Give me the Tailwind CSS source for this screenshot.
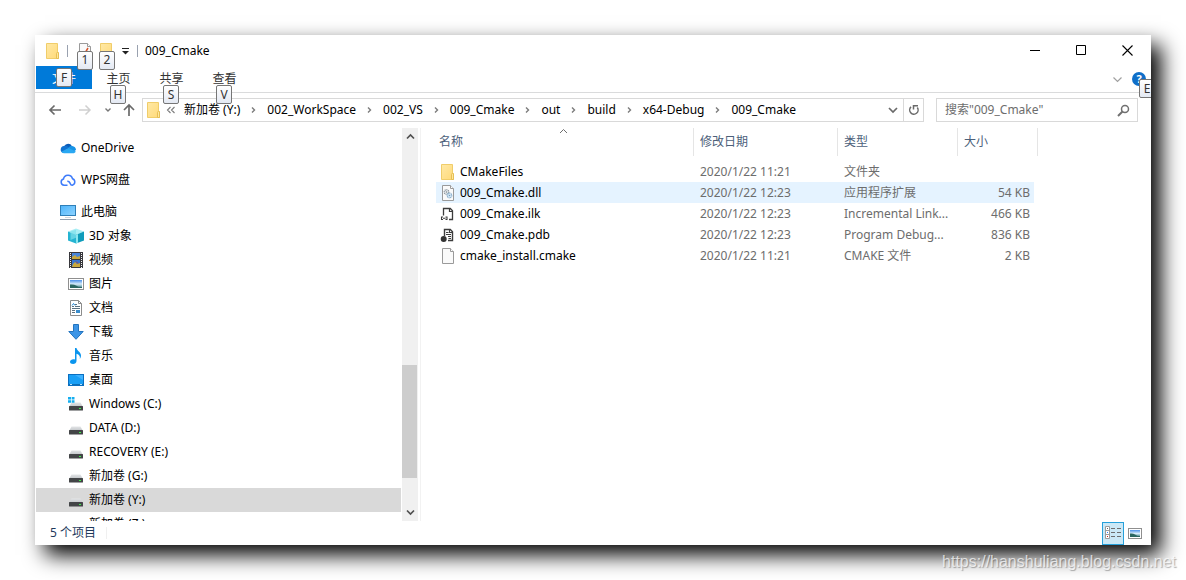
<!DOCTYPE html>
<html lang="zh-CN">
<head>
<meta charset="utf-8">
<meta name="viewport" content="width=device-width, initial-scale=1">
<title>009_Cmake</title>
<script src="https://cdn.jsdelivr.net/npm/@tailwindcss/browser@4"></script>
</head>
<body class="relative flex h-screen min-h-[400px] flex-col overflow-hidden bg-white p-[35px] font-['Noto_Sans','Noto_Sans_CJK_SC',sans-serif] text-xs text-black">

<svg class="absolute size-0" aria-hidden="true">
  <defs>
    <linearGradient id="gFolder" x1="0" y1="0" x2="1" y2="1"><stop offset="0" stop-color="#ffe9a6"/><stop offset="1" stop-color="#ffd978"/></linearGradient>
    <linearGradient id="gScreen" x1="0" y1="0" x2="1" y2="1"><stop offset="0" stop-color="#4db4fb"/><stop offset="1" stop-color="#8fd4ff"/></linearGradient>
    <linearGradient id="gPic" x1="0" y1="0" x2="0" y2="1"><stop offset="0" stop-color="#4a8fe8"/><stop offset=".5" stop-color="#d7ecfa"/><stop offset="1" stop-color="#3f7f86"/></linearGradient>
    <linearGradient id="gDrive" x1="0" y1="0" x2="0" y2="1"><stop offset="0" stop-color="#e3e5e7"/><stop offset="1" stop-color="#bfc3c6"/></linearGradient>
  </defs>
  <symbol id="folder" viewBox="0 0 16 16">
    <path d="M1.500.5h11v9.500h1v5.500h-12z" fill="url(#gFolder)" stroke="#f0cd6a"/>
    <path d="M11.500 15.500v-5q0-1 1-1h1v6z" fill="#ffe79c" stroke="#e6bf55"/>
  </symbol>
  <symbol id="cloud" viewBox="0 0 16 16">
    <path d="M4.200 6.300A4.300 4.300 0 0 1 12 6.200L9 10.500z" fill="#0a5cb8"/>
    <path d="M4 5.900c2-.4 3.600.5 5 1.400L3.500 13A3.600 3.600 0 0 1 4 5.900z" fill="#1173d1"/>
    <path d="M8 8.300c1-2 3-2.500 4.200-2.200 2.200.3 3.800 1.700 3.800 3.900L13 12z" fill="#1793e6"/>
    <path d="M1.400 11.800 8.500 8l7.300 3.400c-.5 1.200-1.500 1.800-2.800 1.800H3.800c-1 0-1.900-.5-2.400-1.400z" fill="#2aa8f2"/>
  </symbol>
  <symbol id="wps" viewBox="0 0 16 16">
    <path d="M7.500 13.200H4.100A3.100 3.100 0 0 1 3.500 7.100 4.600 4.600 0 0 1 12.500 6.700 3.400 3.400 0 0 1 12.300 13.200Q10.800 13.300 10.300 11.700 9.500 9.200 7.300 9.300" fill="none" stroke="#3d7bfa" stroke-width="1.500" stroke-linejoin="round"/>
  </symbol>
  <symbol id="pc" viewBox="0 0 16 16">
    <rect x=".5" y="1.500" width="15" height="10" fill="url(#gScreen)" stroke="#2f7fb8"/>
    <path d="M0 15.500h16" stroke="#8f9fb0"/><path d="M5 13.500h6" stroke="#cfd6dc"/>
  </symbol>
  <symbol id="cube" viewBox="0 0 16 16">
    <path d="M0 3.500 8 .5l8 3-8 3.200z" fill="#a9eef5"/><path d="M0 3.500l8 3.200V15.500l-8-3z" fill="#25b4d2"/><path d="M16 3.500 8 6.700v8.800l8-3z" fill="#0f9cbb"/><path d="M2.500 3.500 8 1.800v8L2.500 12z" fill="#7fdfeb" opacity=".7"/><path d="M8 6.700v8.800l2-.7V6z" fill="#8be6ef"/>
  </symbol>
  <symbol id="video" viewBox="0 0 16 16">
    <rect x="1" y="0" width="14" height="16" fill="#38383c"/><rect x="4" y="1" width="8" height="6" fill="#4a86d8"/><rect x="4" y="8" width="8" height="7" fill="#3474cf"/>
    <path d="M4 5l3-2 2 2 3-1v3H4zM5 12l2-2 2 2 3-1v4H4z" fill="#c9a83c"/><path d="M8 9.500l2 2" stroke="#c0392b"/>
    <path d="M2.500 1v15M13.500 1v15" stroke="#f4f4f4" stroke-width="1" stroke-dasharray="1 1"/>
  </symbol>
  <symbol id="picture" viewBox="0 0 16 16">
    <rect x=".5" y="2.500" width="15" height="11" fill="#fff" stroke="#8f8f8f"/><rect x="2" y="4" width="12" height="8" fill="url(#gPic)"/><path d="M2 8.500q4-.5 6 1t6 1.500v1H2z" fill="#2b6660"/>
  </symbol>
  <symbol id="doc" viewBox="0 0 16 16">
    <path d="M2.500.5h8l3 3v12h-11z" fill="#fff" stroke="#8c8c8c"/><path d="M10.500.5v3h3" fill="none" stroke="#8c8c8c"/>
    <path d="M4 6.500h2M7 4.500h2M7 6.500h5M4 8.500h8M4 10.500h3M4 12.500h3" stroke="#5c7180"/><path d="M4 5.500l1.500-2 1.500 2" fill="none" stroke="#1d83d4"/><rect x="8" y="10" width="4" height="3" fill="#3a8dcc"/>
  </symbol>
  <symbol id="down" viewBox="0 0 16 16"><path d="M5.500.5h5v7h4.700L8 15.300.8 7.500h4.700z" fill="#3d95e6" stroke="#2374bf"/></symbol>
  <symbol id="music" viewBox="0 0 16 16"><path d="M7 0h1.500c.3 2.700 4.500 4 4.500 7.500 0 1.400-.6 2.600-1.200 3.500.6-2.700-.5-4.400-3.300-5.200V13c0 1.700-1.600 3-3.400 3S2 15.200 2 13.800s1.700-2.600 3.400-2.600c.6 0 1.100.1 1.600.3z" fill="#0a95ee"/></symbol>
  <symbol id="desktop" viewBox="0 0 16 16"><rect x=".5" y="2.500" width="15" height="11" fill="#1a9ff5" stroke="#0b6fc0"/><path d="M1 12.500h14" stroke="#0d6fb5"/><path d="M2 12.500h2M12 12.500h2" stroke="#b9e2ff"/><path d="M7 3h8v5z" fill="#3fb2ff"/></symbol>
  <symbol id="drive" viewBox="0 0 16 16"><path d="M3.500 6.500h9L15 11H1z" fill="url(#gDrive)"/><rect x="1" y="10" width="14" height="4.500" rx=".5" fill="#434547"/><rect x="11" y="12" width="2" height="1" fill="#3df04a"/></symbol>
  <symbol id="windrive" viewBox="0 0 16 16"><use href="#drive"/><path d="M0 1h3v2.500H0zM3.700 1H6.500v2.500H3.700zM0 4.200h3v2.600H0zM3.700 4.200h2.800v2.600H3.700z" fill="#14aef0"/></symbol>
  <symbol id="page" viewBox="0 0 16 16"><path d="M2.500.5h8l3 3v12h-11z" fill="#fafafa" stroke="#9a9a9a"/><path d="M10.500.5v3h3" fill="#fff" stroke="#9a9a9a"/></symbol>
  <symbol id="dll" viewBox="0 0 16 16"><use href="#page"/><circle cx="6.500" cy="7" r="2.300" fill="#e9edf0" stroke="#8b959e" stroke-dasharray="1 .6" stroke-width="1.200"/><circle cx="6.500" cy="7" r=".8" fill="#7e8891"/><circle cx="9.500" cy="10.500" r="2.300" fill="#dcebf7" stroke="#7fa9c9" stroke-dasharray="1 .6" stroke-width="1.200"/><circle cx="9.500" cy="10.500" r=".8" fill="#6f9cbf"/></symbol>
  <symbol id="ilk" viewBox="0 0 16 16"><path d="M3.500 9.500V2.500h6.800l2.200 2.200v8.800H9" fill="#fff" stroke="#3c3c3c" stroke-width="1.300"/><path d="M9.500 2.500v3h3" fill="none" stroke="#3c3c3c" stroke-width="1.200"/><path d="M3 11H1.500v2.500H3M5.500 11H7v2.500H5.500M3 12.300h2.500" fill="none" stroke="#3c3c3c" stroke-width="1.100"/></symbol>
  <symbol id="pdb" viewBox="0 0 16 16"><path d="M4.500 9V2.500h5.800l2.200 2.200v8.800H8" fill="#fff" stroke="#3c3c3c" stroke-width="1.400"/><path d="M9.500 2.500v3h3M6 5.500h2.500M6 7.500h5M8 9.500h3M8.500 11.500H11" fill="none" stroke="#3c3c3c" stroke-width="1.100"/><circle cx="3.700" cy="12" r="3" fill="#333"/></symbol>
  <symbol id="chev" viewBox="0 0 8 8"><path d="M2.500 1.500 5 4 2.500 6.500" fill="none" stroke="#7b7b7b" stroke-width="1.400"/></symbol>
</svg>

<main class="relative flex min-h-0 flex-1 flex-col overflow-visible bg-white shadow-[10px_10px_20px_#000]">
  <header class="flex h-[31px] shrink-0 items-center pr-px pl-[10px]">
    <svg class="size-4"><use href="#folder"/></svg>
    <span class="ml-[6px] h-3 w-px bg-gray-400"></span>
    <button class="relative ml-[9px] h-4 w-4" aria-label="属性">
      <svg class="size-4" viewBox="0 0 16 16"><path d="M2.500.5h8l3 3v12h-11z" fill="#fafafa" stroke="#9a9a9a"/><path d="M10.500.5v3h3" fill="#fff" stroke="#9a9a9a"/><path d="M6 9l1.500 2L11 5" fill="none" stroke="#d9542b" stroke-width="1.500"/></svg>
      <kbd class="absolute top-2 left-0 z-10 flex h-[19px] w-4 items-center justify-center rounded-xs border border-[#767676] bg-linear-to-b from-white to-[#e4e9f3] font-[inherit] text-[#333]">1</kbd>
    </button>
    <button class="relative ml-[6px] h-4 w-4" aria-label="新建文件夹">
      <svg class="size-4"><use href="#folder"/></svg>
      <kbd class="absolute top-2 left-0 z-10 flex h-[19px] w-4 items-center justify-center rounded-xs border border-[#767676] bg-linear-to-b from-white to-[#e4e9f3] font-[inherit] text-[#333]">2</kbd>
    </button>
    <button class="ml-[6px]" aria-label="自定义快速访问工具栏"><svg class="size-[9px]" viewBox="0 0 9 9"><path d="M1 2.500h7" stroke="#222"/><path d="M1 5h7L4.500 8.500z" fill="#222"/></svg></button>
    <span class="ml-[7px] h-3 w-px bg-gray-400"></span>
    <h1 class="ml-[7px]">009_Cmake</h1>
    <div class="ml-auto flex">
      <button class="flex w-[46px] justify-center" aria-label="最小化"><svg class="size-[11px]" viewBox="0 0 11 11"><path d="M0 5.500h10" stroke="#000"/></svg></button>
      <button class="flex w-[46px] justify-center" aria-label="最大化"><svg class="size-[11px]" viewBox="0 0 11 11"><path d="M.5.5h9v9h-9z" fill="none" stroke="#000"/></svg></button>
      <button class="flex w-[46px] justify-center" aria-label="关闭"><svg class="size-[11px]" viewBox="0 0 11 11"><path d="M.5.5l10 10M10.500.5l-10 10" stroke="#000" stroke-width="1.100"/></svg></button>
    </div>
  </header>

  <nav class="flex h-[27px] shrink-0 items-start border-b border-[#dadbdc] pl-px text-[#333]">
    <button class="relative flex h-[23px] w-14 items-center justify-center bg-[#007ad9] pt-[2px] text-white">文件<kbd class="absolute top-[2px] left-5 z-10 flex h-[19px] w-4 items-center justify-center rounded-xs border border-[#767676] bg-linear-to-b from-white to-[#e4e9f3] font-[inherit] text-[#333]">F</kbd></button>
    <button class="relative flex h-[23px] w-[53px] items-center justify-center pt-[2px]">主页<kbd class="absolute top-[19px] left-[18px] z-10 flex h-[19px] w-4 items-center justify-center rounded-xs border border-[#767676] bg-linear-to-b from-white to-[#e4e9f3] font-[inherit]">H</kbd></button>
    <button class="relative flex h-[23px] w-[53px] items-center justify-center pt-[2px]">共享<kbd class="absolute top-[19px] left-[18px] z-10 flex h-[19px] w-4 items-center justify-center rounded-xs border border-[#767676] bg-linear-to-b from-white to-[#e4e9f3] font-[inherit]">S</kbd></button>
    <button class="relative flex h-[23px] w-[53px] items-center justify-center pt-[2px]">查看<kbd class="absolute top-[19px] left-[18px] z-10 flex h-[19px] w-4 items-center justify-center rounded-xs border border-[#767676] bg-linear-to-b from-white to-[#e4e9f3] font-[inherit]">V</kbd></button>
    <div class="ml-auto flex h-[26px] items-center gap-[10px] pr-[5px]">
      <button aria-label="展开功能区"><svg class="size-[9px]" viewBox="0 0 9 9"><path d="M.5 2.500l4 4 4-4" fill="none" stroke="#a0a0a0" stroke-width="1.200"/></svg></button>
      <button class="flex size-[14px] items-center justify-center rounded-full bg-[#0f6fc9] text-[11px] font-bold text-white" aria-label="帮助">?</button>
    </div>
    <div class="absolute top-11 right-0 z-10 h-[19px] w-3 overflow-hidden"><kbd class="flex h-[19px] w-4 items-center justify-center rounded-xs border border-[#767676] bg-linear-to-b from-white to-[#e4e9f3] font-[inherit]">E</kbd></div>
  </nav>

  <div class="flex h-[35px] shrink-0 items-center pr-[13px] pb-px pl-[13px]">
    <button aria-label="后退"><svg class="size-[14px]" viewBox="0 0 14 14"><path d="M13 7H2M6.500 2.500 2 7l4.500 4.500" fill="none" stroke="#6a6a6a" stroke-width="1.700"/></svg></button>
    <button class="ml-4" aria-label="前进"><svg class="size-[14px]" viewBox="0 0 14 14"><path d="M1 7h11M7.500 2.500 12 7l-4.500 4.500" fill="none" stroke="#d0d0d0" stroke-width="1.500"/></svg></button>
    <button class="ml-3" aria-label="最近位置"><svg class="size-[8px]" viewBox="0 0 8 8"><path d="M1.500 2.500 4 5l2.500-2.500" fill="none" stroke="#777" stroke-width="1.400"/></svg></button>
    <button class="ml-[10px]" aria-label="上移"><svg class="size-[14px]" viewBox="0 0 14 14"><path d="M7 13V2M2 7l5-5 5 5" fill="none" stroke="#6a6a6a" stroke-width="1.700"/></svg></button>
    <div class="ml-[6px] flex h-6 min-w-0 flex-1 items-center border border-[#d9d9d9] pl-[3px]">
      <svg class="size-4 shrink-0"><use href="#folder"/></svg>
      <svg class="ml-1 size-[10px] shrink-0" viewBox="0 0 10 10"><path d="M4.500 2 1.500 5l3 3M8.500 2l-3 3 3 3" fill="none" stroke="#7b7b7b" stroke-width="1.100"/></svg>
      <nav class="ml-2 flex flex-1 items-center gap-[9px] overflow-hidden pb-px whitespace-nowrap" aria-label="路径">
        <a href="#">新加卷 (Y:)</a><svg class="h-2 w-[9px] shrink-0"><use href="#chev"/></svg>
        <a href="#">002_WorkSpace</a><svg class="h-2 w-[9px] shrink-0"><use href="#chev"/></svg>
        <a href="#">002_VS</a><svg class="h-2 w-[9px] shrink-0"><use href="#chev"/></svg>
        <a href="#">009_Cmake</a><svg class="h-2 w-[9px] shrink-0"><use href="#chev"/></svg>
        <a href="#">out</a><svg class="h-2 w-[9px] shrink-0"><use href="#chev"/></svg>
        <a href="#">build</a><svg class="h-2 w-[9px] shrink-0"><use href="#chev"/></svg>
        <a href="#">x64-Debug</a><svg class="h-2 w-[9px] shrink-0"><use href="#chev"/></svg>
        <a href="#">009_Cmake</a>
      </nav>
      <button class="flex w-5 justify-center" aria-label="以前的位置"><svg class="size-[10px]" viewBox="0 0 10 10"><path d="M1 3l4 4 4-4" fill="none" stroke="#6a6a6a" stroke-width="1.700"/></svg></button>
      <button class="flex h-full w-5 items-center justify-center border-l border-[#d9d9d9]" aria-label="刷新"><svg class="size-3" viewBox="0 0 12 12"><path d="M3 2.900A4.200 4.200 0 1 0 9.300 3.500" fill="none" stroke="#6a6a6a" stroke-width="1.500"/><path d="M5.500 5.500V1.700H10" fill="none" stroke="#6a6a6a" stroke-width="1.500"/></svg></button>
    </div>
    <label class="ml-3 flex h-6 w-[202px] items-center border border-[#d9d9d9] pr-[7px] pl-2">
      <input class="min-w-0 flex-1 outline-none placeholder:text-[#6d6d6d]" type="search" aria-label="搜索" placeholder='搜索"009_Cmake"'>
      <svg class="size-[13px]" viewBox="0 0 13 13"><circle cx="8" cy="5" r="3.500" fill="none" stroke="#707070" stroke-width="1.500"/><path d="M5.500 7.500 1 12" stroke="#707070" stroke-width="2"/></svg>
    </label>
  </div>

  <div class="flex min-h-0 flex-1">
    <aside class="flex w-[383px] shrink-0 pl-px">
      <ul class="flex-1 overflow-hidden pt-2">
        <li class="mb-2 flex h-6 items-center gap-[5px] pl-6"><svg class="size-4"><use href="#cloud"/></svg>OneDrive</li>
        <li class="mb-2 flex h-6 items-center gap-[5px] pl-6"><svg class="size-4"><use href="#wps"/></svg>WPS网盘</li>
        <li class="flex h-6 items-center gap-[5px] pl-6"><svg class="size-4"><use href="#pc"/></svg>此电脑</li>
        <li class="flex h-6 items-center gap-[5px] pl-8"><svg class="size-4"><use href="#cube"/></svg>3D 对象</li>
        <li class="flex h-6 items-center gap-[5px] pl-8"><svg class="size-4"><use href="#video"/></svg>视频</li>
        <li class="flex h-6 items-center gap-[5px] pl-8"><svg class="size-4"><use href="#picture"/></svg>图片</li>
        <li class="flex h-6 items-center gap-[5px] pl-8"><svg class="size-4"><use href="#doc"/></svg>文档</li>
        <li class="flex h-6 items-center gap-[5px] pl-8"><svg class="size-4"><use href="#down"/></svg>下载</li>
        <li class="flex h-6 items-center gap-[5px] pl-8"><svg class="size-4"><use href="#music"/></svg>音乐</li>
        <li class="flex h-6 items-center gap-[5px] pl-8"><svg class="size-4"><use href="#desktop"/></svg>桌面</li>
        <li class="flex h-6 items-center gap-[5px] pl-8"><svg class="size-4"><use href="#windrive"/></svg>Windows (C:)</li>
        <li class="flex h-6 items-center gap-[5px] pl-8"><svg class="size-4"><use href="#drive"/></svg>DATA (D:)</li>
        <li class="flex h-6 items-center gap-[5px] pl-8"><svg class="size-4"><use href="#drive"/></svg>RECOVERY (E:)</li>
        <li class="flex h-6 items-center gap-[5px] pl-8"><svg class="size-4"><use href="#drive"/></svg>新加卷 (G:)</li>
        <li class="flex h-6 items-center gap-[5px] bg-[#d9d9d9] pl-8" aria-current="true"><svg class="size-4"><use href="#drive"/></svg>新加卷 (Y:)</li>
        <li class="flex h-6 items-center gap-[5px] pl-8"><svg class="size-4"></svg>新加卷 (Z:)</li>
      </ul>
      <div class="ml-px flex w-4 flex-col items-center bg-[#f0f0f0]">
        <svg class="mt-1 size-[9px] shrink-0" viewBox="0 0 9 9"><path d="M1 6.500 4.500 3 8 6.500" fill="none" stroke="#505050" stroke-width="1.700"/></svg>
        <span class="flex-1"></span>
        <span class="h-[113px] w-[15px] shrink-0 self-start bg-[#cdcdcd]"></span>
        <svg class="mt-[30px] mb-1 size-[9px] shrink-0" viewBox="0 0 9 9"><path d="M1 2.500 4.500 6 8 2.500" fill="none" stroke="#505050" stroke-width="1.700"/></svg>
      </div>
    </aside>
    <section class="ml-[2px] min-w-0 flex-1 overflow-hidden border-l border-[#f2f2f2] pl-[15px]">
      <table class="w-[602px] table-fixed text-left text-[#6d6d6d]">
        <colgroup><col class="w-[258px]"><col class="w-36"><col class="w-[120px]"><col class="w-20"></colgroup>
        <thead class="text-[#4c607a]">
          <tr class="h-[33px] align-top">
            <th class="p-0 font-normal"><div class="relative flex h-7 items-center border-r border-[#e5e5e5] pl-[3px]">名称<svg class="absolute top-0 left-[123px] h-[6px] w-[9px]" viewBox="0 0 9 6"><path d="M1 5l3.500-3.500L8 5" fill="none" stroke="#6d6d6d"/></svg></div></th>
            <th class="p-0 font-normal"><div class="flex h-7 items-center border-r border-[#e5e5e5] pl-[6px]">修改日期</div></th>
            <th class="p-0 font-normal"><div class="flex h-7 items-center border-r border-[#e5e5e5] pl-[6px]">类型</div></th>
            <th class="p-0 font-normal"><div class="flex h-7 items-center border-r border-[#e5e5e5] pl-[6px]">大小</div></th>
          </tr>
        </thead>
        <tbody>
          <tr class="h-[21px]">
            <td class="p-0 text-black"><div class="flex h-[21px] items-center gap-1 pl-1"><svg class="size-4"><use href="#folder"/></svg>CMakeFiles</div></td>
            <td class="p-0 pl-[6px]">2020/1/22 11:21</td><td class="p-0 pl-[6px]">文件夹</td><td class="p-0"></td>
          </tr>
          <tr class="h-[21px]" aria-selected="true">
            <td class="bg-[#e5f3ff] p-0 text-black"><div class="flex h-[21px] items-center gap-1 pl-1"><svg class="size-4"><use href="#dll"/></svg>009_Cmake.dll</div></td>
            <td class="bg-[#e5f3ff] p-0 pl-[6px]">2020/1/22 12:23</td><td class="bg-[#e5f3ff] p-0 pl-[6px]">应用程序扩展</td><td class="p-0"><div class="mr-1 flex h-[21px] items-center justify-end bg-[#e5f3ff] pr-1">54 KB</div></td>
          </tr>
          <tr class="h-[21px]">
            <td class="p-0 text-black"><div class="flex h-[21px] items-center gap-1 pl-1"><svg class="size-4"><use href="#ilk"/></svg>009_Cmake.ilk</div></td>
            <td class="p-0 pl-[6px]">2020/1/22 12:23</td><td class="p-0 pl-[6px]">Incremental Link...</td><td class="p-0 pr-2 text-right">466 KB</td>
          </tr>
          <tr class="h-[21px]">
            <td class="p-0 text-black"><div class="flex h-[21px] items-center gap-1 pl-1"><svg class="size-4"><use href="#pdb"/></svg>009_Cmake.pdb</div></td>
            <td class="p-0 pl-[6px]">2020/1/22 12:23</td><td class="p-0 pl-[6px]">Program Debug...</td><td class="p-0 pr-2 text-right">836 KB</td>
          </tr>
          <tr class="h-[21px]">
            <td class="p-0 text-black"><div class="flex h-[21px] items-center gap-1 pl-1"><svg class="size-4"><use href="#page"/></svg>cmake_install.cmake</div></td>
            <td class="p-0 pl-[6px]">2020/1/22 11:21</td><td class="p-0 pl-[6px]">CMAKE 文件</td><td class="p-0 pr-2 text-right">2 KB</td>
          </tr>
        </tbody>
      </table>
    </section>
  </div>

  <footer class="flex h-6 shrink-0 items-center pr-[9px] pl-[15px] text-[#1e395b]">
    <span>5 个项目</span>
    <span class="ml-[10px] h-3 w-px bg-[#f0f0f0]"></span>
    <button class="ml-auto flex h-[23px] w-[22px] items-center justify-center border border-[#26a0da] bg-[#cbe8f6]" aria-label="详细信息">
      <svg class="h-[14px] w-[16px]" viewBox="0 0 16 14"><path d="M.5.5h4v12h-4zM.5 4.500h4M.5 8.500h4" fill="#fff" stroke="#9b9b9b"/><path d="M6 2.500h4M12 2.500h4M6 6.500h4M12 6.500h4M6 10.500h4M12 10.500h4" stroke="#6d6d6d"/><path d="M2 2.500h1" stroke="#666"/><path d="M2 6.500h1" stroke="#2a7fff"/><path d="M2 10.500h1" stroke="#c22"/></svg>
    </button>
    <button class="ml-1 flex" aria-label="大图标"><svg class="h-[11px] w-[14px]" viewBox="0 0 14 11"><rect x=".5" y=".5" width="13" height="10" fill="#fff" stroke="#8f8f8f"/><rect x="2" y="2" width="10" height="7" fill="url(#gPic)"/><path d="M2 5.500q3-.5 5 1t5 1.500v1H2z" fill="#2b6660"/></svg></button>
  </footer>
</main>

<p class="absolute right-[10px] bottom-2 font-['Liberation_Sans',sans-serif] text-base leading-5 text-white/70 [text-shadow:1px_1px_1px_#0000004d]">https://hanshuliang.blog.csdn.net</p>
</body>
</html>
